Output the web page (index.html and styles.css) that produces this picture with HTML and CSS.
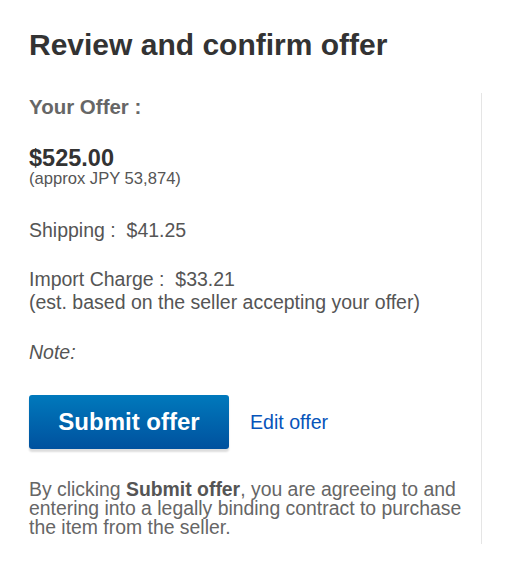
FILE: index.html
```html
<!DOCTYPE html>
<html lang="en">
<head>
  <meta charset="UTF-8">
  <meta name="viewport" content="width=device-width, initial-scale=1.0">
  <title>Review and confirm offer</title>
  <link rel="stylesheet" href="styles.css">
</head>
<body>

  <h1 class="page-title">Review and confirm offer</h1>

  <div class="offer">
    <div class="offer-label">Your Offer :</div>

    <div class="offer-price">
      <div class="price">$525.00</div>
      <div class="approx">(approx JPY 53,874)</div>
    </div>

    <div class="row shipping">Shipping :&nbsp; $41.25</div>

    <div class="row import">
      Import Charge :&nbsp; $33.21<br>
      (est. based on the seller accepting your offer)
    </div>

    <div class="row note">Note:</div>

    <div class="actions">
      <button class="submit-btn" type="button">Submit offer</button>
      <a class="edit-link" href="#">Edit offer</a>
    </div>

    <p class="legal">By clicking <b>Submit offer</b>, you are agreeing to and entering into a legally binding contract to purchase the item from the seller.</p>
  </div>

</body>
</html>
```

FILE: styles.css
```css
body {
  margin: 0;
  padding: 0;
  background-color: #ffffff;
  color: #555555;
  font-family: 'Liberation Sans', Arial, sans-serif;
}

.page-title {
  margin: 0;
  padding: 29px 0 0 29px;
  font-size: 30px;
  line-height: 32px;
  font-weight: bold;
  color: #333333;
}

.offer {
  margin: 32px 0 0 29px;
  width: 452px;
  border-right: 1px solid #e5e5e5;
  padding-top: 2px;
  padding-bottom: 7px;
}

.offer-label {
  font-size: 20.5px;
  line-height: 24px;
  font-weight: bold;
  color: #666666;
}

.offer-price {
  margin-top: 28px;
}

.price {
  font-size: 23.5px;
  line-height: 23px;
  font-weight: bold;
  color: #333333;
}

.approx {
  font-size: 16.6px;
  line-height: 17px;
  color: #555555;
}

.row {
  font-size: 19.5px;
  line-height: 23px;
  color: #555555;
}

.shipping {
  margin-top: 32px;
}

.import {
  margin-top: 26px;
}

.note {
  margin-top: 27px;
  font-style: italic;
}

.actions {
  margin-top: 31px;
  display: flex;
  align-items: center;
  gap: 21px;
}

.submit-btn {
  width: 200px;
  height: 54px;
  border: none;
  border-radius: 3px;
  background: linear-gradient(to bottom, #0079bc, #00519e);
  box-shadow: 0 3px 2px #dddddd;
  color: #ffffff;
  font-family: 'Liberation Sans', Arial, sans-serif;
  font-size: 24px;
  font-weight: bold;
  cursor: pointer;
}

.edit-link {
  font-size: 19.6px;
  color: #0654ba;
  text-decoration: none;
}

.legal {
  margin: 31px 0 0 0;
  padding-right: 7px;
  font-size: 19.4px;
  line-height: 19px;
  color: #666666;
}

.legal b {
  color: #555555;
}
```
